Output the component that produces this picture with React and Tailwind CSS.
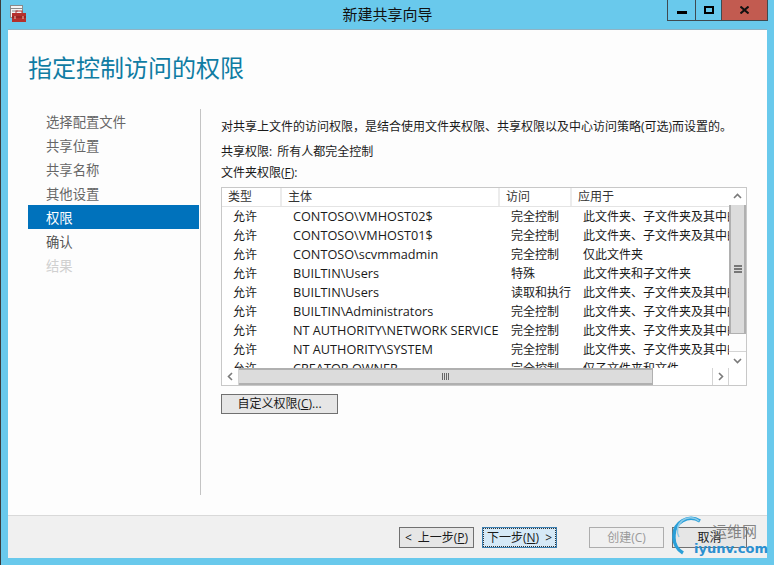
const FONT = '"Open Sans","Noto Sans CJK SC",sans-serif';

const steps = [
  ["选择配置文件", "text-[#666666]"],
  ["共享位置", "text-[#666666]"],
  ["共享名称", "text-[#666666]"],
  ["其他设置", "text-[#666666]"],
  ["权限", "bg-[#0072bc] text-white"],
  ["确认", "text-[#555555]"],
  ["结果", "text-[#d0d0d0]"],
];

const rows = [
  ["允许", "CONTOSO\\VMHOST02$", "完全控制", "此文件夹、子文件夹及其中的文件"],
  ["允许", "CONTOSO\\VMHOST01$", "完全控制", "此文件夹、子文件夹及其中的文件"],
  ["允许", "CONTOSO\\scvmmadmin", "完全控制", "仅此文件夹"],
  ["允许", "BUILTIN\\Users", "特殊", "此文件夹和子文件夹"],
  ["允许", "BUILTIN\\Users", "读取和执行", "此文件夹、子文件夹及其中的文件"],
  ["允许", "BUILTIN\\Administrators", "完全控制", "此文件夹、子文件夹及其中的文件"],
  ["允许", "NT AUTHORITY\\NETWORK SERVICE", "完全控制", "此文件夹、子文件夹及其中的文件"],
  ["允许", "NT AUTHORITY\\SYSTEM", "完全控制", "此文件夹、子文件夹及其中的文件"],
  ["允许", "CREATOR OWNER", "完全控制", "仅子文件夹和文件"],
];

function Chevron({ d }) {
  return (
    <svg width="9" height="9" viewBox="0 0 9 9" fill="none" stroke="#7a7a7a" strokeWidth="1.6">
      <path d={d} />
    </svg>
  );
}

function Btn({ children, className }) {
  return (
    <div className={"flex h-[21px] w-[75px] items-center justify-center border text-[12px] " + className}>
      {children}
    </div>
  );
}

export default function App() {
  return (
    <div
      className="relative flex h-[565px] w-[774px] flex-col overflow-hidden border-l border-l-[#3c3c3c] bg-[#69c9ec] pr-[7px] pb-[7px] pl-[7px] text-[12px] text-[#1a1a1a]"
      style={{ fontFamily: FONT }}
    >
      {/* title bar */}
      <div className="relative flex h-[29px] shrink-0 items-center justify-center text-[15px] text-[#111]">
        <svg className="absolute top-[5px] left-[2px]" width="17" height="18" viewBox="0 0 17 18">
          <rect x="0.5" y="0.5" width="12" height="12" fill="#f4f4f4" stroke="#8a8a8a" />
          <path d="M0 3.5h13M2 6h6M2 8.5h6" stroke="#8a8a8a" />
          <rect x="2" y="8" width="14" height="9" fill="#b5302c" />
          <rect x="6" y="6" width="6" height="3" fill="none" stroke="#b5302c" />
          <path d="M2 12h14" stroke="#7f1c1a" />
          <path d="M5 11v3M13 11v3" stroke="#f0c0b0" />
        </svg>
        <span>新建共享向导</span>
        <div className="absolute top-0 right-[-1px] flex h-[21px] border-b border-l border-[#3f4a50]">
          <div className="flex w-[28px] items-center justify-center border-r border-[#3f4a50] pt-[4px]">
            <div className="h-[3px] w-[10px] bg-black" />
          </div>
          <div className="flex w-[26px] items-center justify-center border-r border-[#3f4a50]">
            <div className="h-[8px] w-[10px] border-2 border-black" />
          </div>
          <div className="flex w-[46px] items-center justify-center border-r border-[#3f4a50] bg-[#c25b50]">
            <svg width="9" height="8" viewBox="0 0 9 8" stroke="#111" strokeWidth="2" fill="none">
              <path d="M0.5 0.5L8.5 7.5M8.5 0.5L0.5 7.5" />
            </svg>
          </div>
        </div>
      </div>

      {/* client area */}
      <div className="flex min-h-0 flex-1 flex-col border-t border-t-[#8fb3c4] bg-[#fdfdfd]">
        <div className="flex h-[79px] shrink-0 items-start pt-[20px] pl-[20px] text-[24px] leading-[36px] text-[#0f7ca3]">
          指定控制访问的权限
        </div>

        <div className="flex min-h-0 flex-1">
          <div className="mb-[20px] flex w-[193px] shrink-0 flex-col border-r border-r-[#c4c4c4] pl-[20px]">
            <div className="flex w-[171px] flex-col">
              {steps.map(([t, c]) => (
                <div key={t} className={"flex h-[24px] items-center pt-[3px] pl-[18px] text-[13.33px] " + c}>
                  {t}
                </div>
              ))}
            </div>
          </div>

          <div className="flex min-w-0 flex-1 flex-col pl-[20px]">
            <div className="mt-[9px] h-[18px] leading-[18px] whitespace-nowrap">
              对共享上文件的访问权限，是结合使用文件夹权限、共享权限以及中心访问策略(可选)而设置的。
            </div>
            <div className="mt-[7px] h-[18px] leading-[18px]">
              共享权限:<span className="ml-[5px]">所有人都完全控制</span>
            </div>
            <div className="mt-[3px] h-[18px] leading-[18px]">
              文件夹权限(<span className="underline">F</span>):
            </div>

            {/* list */}
            <div className="mt-[5px] flex h-[199px] w-[526px] flex-col border border-[#c8c8c8] bg-white">
              <div className="flex min-h-0 flex-1">
                <div className="min-w-0 flex-1 overflow-hidden">
                  <div className="grid h-[19px] grid-cols-[60px_218px_72px_157px] border-b border-b-[#e4e4e4] text-[#333]">
                    {["类型", "主体", "访问", "应用于"].map((h) => (
                      <div key={h} className="flex items-center border-r-2 border-r-[#ececec] pl-[6px] whitespace-nowrap last:border-r-0">
                        {h}
                      </div>
                    ))}
                  </div>
                  {rows.map((r, i) => (
                    <div key={i} className="grid h-[19px] grid-cols-[60px_218px_72px_157px] items-center">
                      {r.map((c, j) => (
                        <div
                          key={j}
                          className={
                            j === 1
                              ? "overflow-hidden pl-[11px] text-[12.7px] leading-[19px] whitespace-nowrap"
                              : "overflow-hidden pl-[11px] leading-[19px] whitespace-nowrap"
                          }
                        >
                          {c}
                        </div>
                      ))}
                    </div>
                  ))}
                </div>
                {/* vertical scrollbar */}
                <div className="flex w-[17px] shrink-0 flex-col bg-[#fdfdfd]">
                  <div className="flex h-[17px] items-center justify-center bg-white">
                    <Chevron d="M1 6l3.5-3.5L8 6" />
                  </div>
                  <div className="flex h-[129px] flex-col items-center justify-center gap-[1px] border-x-2 border-b border-[#b0b0b0] bg-[#dcdcdc]">
                    <div className="h-[2px] w-[8px] bg-[#777]" />
                    <div className="h-[2px] w-[8px] bg-[#777]" />
                    <div className="h-[2px] w-[8px] bg-[#777]" />
                  </div>
                  <div className="flex-1" />
                  <div className="flex h-[17px] items-center justify-center border-t border-[#d4d4d4] bg-white">
                    <Chevron d="M1 3l3.5 3.5L8 3" />
                  </div>
                </div>
              </div>
              {/* horizontal scrollbar */}
              <div className="flex h-[17px] shrink-0 bg-white">
                <div className="flex w-[17px] items-center justify-center border-r border-[#d4d4d4]">
                  <Chevron d="M6 1L2.5 4.5L6 8" />
                </div>
                <div className="flex w-[414px] items-center justify-center border-y-2 border-r border-[#b0b0b0] bg-[#dcdcdc]">
                  <div className="flex h-[7px] gap-[1px]">
                    <div className="w-[1px] bg-[#666]" />
                    <div className="w-[1px] bg-[#666]" />
                    <div className="w-[1px] bg-[#666]" />
                    <div className="w-[1px] bg-[#666]" />
                  </div>
                </div>
                <div className="flex-1" />
                <div className="flex w-[17px] items-center justify-center border-x border-[#d4d4d4]">
                  <Chevron d="M3 1l3.5 3.5L3 8" />
                </div>
                <div className="w-[17px]" />
              </div>
            </div>

            <div className="mt-[8px] flex h-[20px] w-[117px] items-center justify-center border border-[#707070] bg-[#e6e6e6]">
              自定义权限(<span className="underline">C</span>)...
            </div>
          </div>
        </div>

        {/* footer */}
        <div className="flex h-[43px] shrink-0 items-center border-t border-t-[#d9d9d9] bg-[#f0f0f0] pt-[1px] pl-[391px]">
          <Btn className="border-[#707070] bg-[#e6e6e6]">
            <span className="mr-[6px]">&lt;</span>上一步(<span className="underline">P</span>)
          </Btn>
          <Btn className="ml-[8px] border-[#3c7fb1] bg-[#d5e9f7] outline-1 -outline-offset-2 outline-[#333] outline-dotted">
            下一步(<span className="underline">N</span>)<span className="ml-[6px]">&gt;</span>
          </Btn>
          <Btn className="ml-[32px] border-[#adadad] bg-[#f0f0f0] text-[#9a9a9a]">创建(C)</Btn>
          <Btn className="ml-[8px] border-[#707070] bg-[#e6e6e6]">取消</Btn>
        </div>
      </div>

      {/* watermark */}
      <div className="absolute top-[516px] left-[669px] h-[48px] w-[104px]">
        <svg className="absolute top-0 left-0" width="46" height="42" viewBox="0 0 46 42" fill="none">
          <path d="M30 5A17 17 0 0 0 4 20A18 18 0 0 0 13 37" stroke="#2a9fd8" strokeWidth="3.5" />
          <path d="M29 5A13 13 0 0 0 9 21" stroke="#8ccbe8" strokeWidth="1.5" />
        </svg>
        <div className="absolute top-[5px] left-[42px] text-[15px] leading-[20px] text-[#777]/90">运维网</div>
        <div
          className="absolute top-[24px] left-[24px] text-[13px] leading-[18px] font-bold text-[#2a8fd0]"
          style={{ fontFamily: '"DejaVu Sans",sans-serif' }}
        >
          iyunv.com
        </div>
      </div>
    </div>
  );
}
